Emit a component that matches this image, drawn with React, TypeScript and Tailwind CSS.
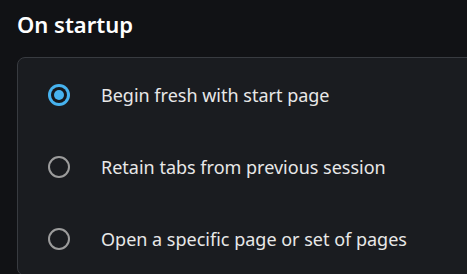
import React, { useState } from 'react'

const options = [
  { id: 'fresh', label: 'Begin fresh with start page' },
  { id: 'retain', label: 'Retain tabs from previous session' },
  { id: 'specific', label: 'Open a specific page or set of pages' },
]

const Radio = ({ checked }: { checked: boolean }) =>
  checked ? (
    <div className="w-[22px] h-[22px] rounded-full bg-[#47b3ef] flex items-center justify-center shrink-0">
      <div className="w-[16px] h-[16px] rounded-full bg-[#16181c] flex items-center justify-center">
        <div className="w-[10px] h-[10px] rounded-full bg-[#47b3ef]" />
      </div>
    </div>
  ) : (
    <div className="w-[22px] h-[22px] rounded-full border-2 border-[#9c9c9c] shrink-0" />
  )

export default function App() {
  const [selected, setSelected] = useState('fresh')

  return (
    <div
      className="w-[467px] h-[274px] overflow-hidden bg-[#111215] text-[#e8e8e8] pl-[17px]"
      style={{ fontFamily: '"Noto Sans", "Open Sans", sans-serif' }}
    >
      <h1 className="h-[57px] pt-[9px] text-[22px] leading-[30px] font-semibold text-white">On startup</h1>
      <div className="w-[480px] rounded-l-lg border border-[#383b40] bg-[#1a1c20] pt-[1px] pl-[30px]">
        {options.map((o) => (
          <div
            key={o.id}
            className="h-[72px] flex items-center gap-[31px] cursor-pointer"
            onClick={() => setSelected(o.id)}
          >
            <Radio checked={selected === o.id} />
            <span className="text-[18px] leading-6">{o.label}</span>
          </div>
        ))}
      </div>
    </div>
  )
}
